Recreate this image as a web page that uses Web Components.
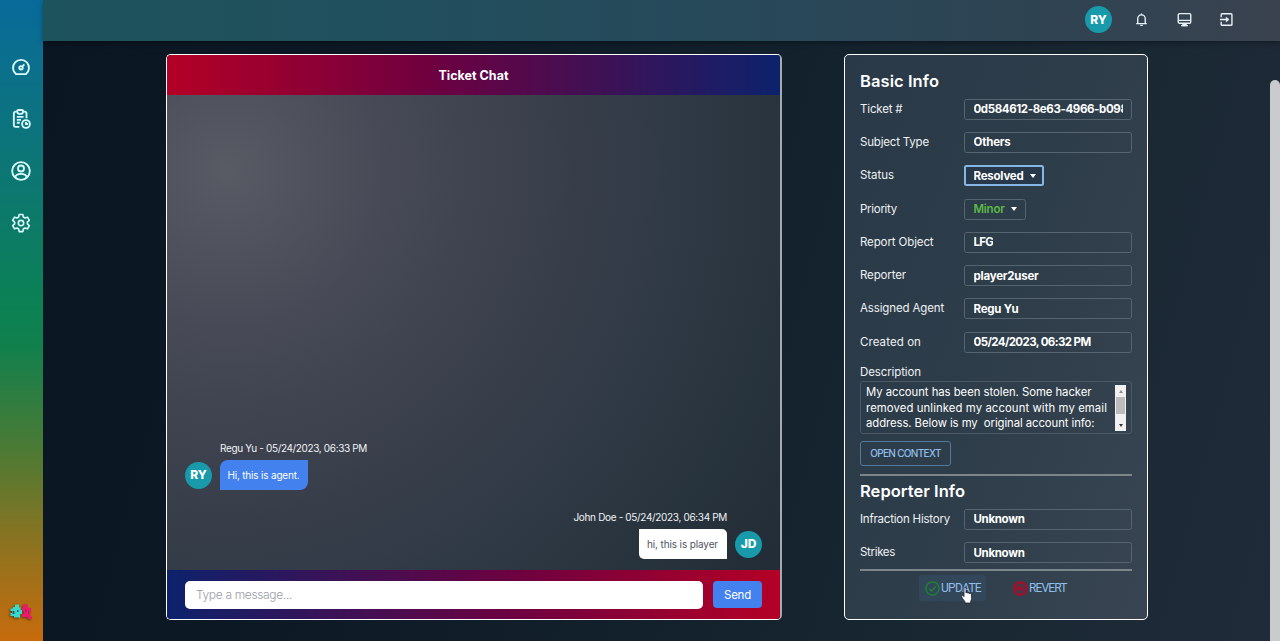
<!DOCTYPE html>
<html lang="en">
<head>
<meta charset="utf-8">
<title>Ticket Chat</title>
<style>
html,body{margin:0;height:100%;overflow:hidden}
body{font-family:Inter,"Open Sans",sans-serif;color:#fff;background:#0b1824}
</style>
</head>
<body>
<support-app></support-app>
<script>
const define=(name,html,setup)=>{
  const t=document.createElement('template');t.innerHTML=html;
  customElements.define(name,class extends HTMLElement{
    connectedCallback(){
      if(this.shadowRoot)return;
      this.attachShadow({mode:'open'}).append(t.content.cloneNode(true));
      if(setup)setup(this,this.shadowRoot);
    }
  });
};

/* A run of text tracked to a set width */
define('fit-text',`<style>:host{display:inline-block;white-space:pre}</style><slot></slot>`,(el)=>{
  const w=parseFloat(el.getAttribute('w'));
  const n=el.textContent.length;
  const r=document.createRange();r.selectNodeContents(el);
  el.style.letterSpacing=((w-r.getBoundingClientRect().width)/n).toFixed(3)+'px';
});

const icons={
 gauge:`<path d="M6 20.500h12a9.600 9.600 0 1 0-12 0z"/><circle cx="12" cy="13" r="2.100"/><path d="M13.600 11.400 16 8.800"/>`,
 clip:`<path d="M10 21.500H5.600a2.200 2.200 0 0 1-2.200-2.200V5.400a2.200 2.200 0 0 1 2.200-2.200H7M15 3.200h1.400a2.200 2.200 0 0 1 2.200 2.200V11"/><path d="M7.500 2.500c0-1 .5-1.300 1.500-1.300h4c1 0 1.500.3 1.500 1.300 0 2-1 3.300-2.200 3.300H9.700c-1.200 0-2.200-1.300-2.200-3.300z"/><path d="M7 9.500h8M7 13h5M7 16.500h3.500"/><circle cx="18" cy="18" r="4.700"/><path d="M18 15.500V18h2.500"/>`,
 user:`<circle cx="12" cy="12" r="10.600"/><circle cx="12" cy="9" r="3.600"/><path d="M5 19.700c.8-3 3.600-4.200 7-4.200s6.200 1.200 7 4.200"/>`,
 gear:`<circle cx="12" cy="12" r="3.200"/><path d="M9.800 1.700h4.400l.6 3.100 2 1.200 3-1 2.200 3.800-2.400 2.100v2.200l2.400 2.100-2.200 3.800-3-1-2 1.200-.6 3.100H9.800l-.6-3.100-2-1.200-3 1L2 15.200l2.400-2.100v-2.200L2 8.800 4.200 5l3 1 2-1.200z" stroke-linejoin="round"/>`,
 bell:`<path d="M3.500 18.500h17M6 18v-7.500a6 6 0 0 1 12 0V18"/><path d="M12 4.500V2.200M10 21.300h4"/>`,
 monitor:`<rect x="2" y="2.500" width="20" height="15.500" rx="2"/><path d="M2.500 13.300h19M6.500 21.800h11"/><path d="M9.500 18v3.500h5V18" fill="currentColor"/>`,
 login:`<path d="M3.500 8.500V4.200c0-1 .4-1.400 1.400-1.400h14.400c1 0 1.400.4 1.400 1.400v15.600c0 1-.4 1.400-1.400 1.400H4.900c-1 0-1.400-.4-1.400-1.400v-4.300M1.500 12H14"/><path d="m11.500 8.200 4.500 3.800-4.500 3.800z" fill="currentColor" stroke-width="1"/>`,
 check:`<circle cx="12" cy="12" r="10.500"/><path d="m7 12.500 3.500 3.500 7-7.500"/>`,
 revert:`<circle cx="12" cy="12" r="10" stroke-width="3.600"/><path d="M4 5l16 14" stroke-width="1.500"/><path d="M5 12h10M11 7.500 6 12l5 4.500"/><circle cx="15" cy="12" r="2.500"/>`
};
define('ui-icon',`<style>:host{display:block;width:var(--s,18px);height:var(--s,18px);flex:none}svg{display:block;width:100%;height:100%;fill:none;stroke:currentColor;stroke-width:var(--sw,2)}</style><svg viewBox="0 0 24 24"></svg>`,(el,r)=>{r.querySelector('svg').innerHTML=icons[el.getAttribute('name')]});

define('user-avatar',`<style>:host{display:flex;flex:none;width:27px;height:27px;border-radius:50%;background:#189aab;align-items:center;justify-content:center;font-size:12px;font-weight:800;line-height:1}</style><slot></slot>`);

define('side-bar',`<style>
:host{display:flex;flex-direction:column;align-items:center;width:43px;flex:none;box-sizing:border-box;padding:57px 1px 20px 0;color:#d9fbff;background:linear-gradient(180deg,#086a9b 0,#0b7089 12%,#0c7772 28%,#0b8153 48%,#11804d 54%,#4b7a34 70%,#8d7320 85%,#c76b0c 100%)}
nav{display:flex;flex-direction:column;gap:32px;--s:20px;--sw:2.200}
.logo{display:block;margin-top:auto;width:24px;height:19px;filter:drop-shadow(-1px 1px 1px #0007)}
</style><nav><ui-icon name="gauge"></ui-icon><ui-icon name="clip"></ui-icon><ui-icon name="user"></ui-icon><ui-icon name="gear" style="--sw:1.900"></ui-icon></nav>
<svg class="logo" viewBox="0 0 24 19"><path fill="#35d9ce" d="M6 2.500h4v3h1.500V8H13v4h-2v3.500H5V14H1.500v-3H3V9H1.500V6.500H4V5h2z"/><path fill="#32566b" d="M3.500 9h2v3h-2zM8 8h1.500v2H8z"/><path fill="#ed176d" d="M14 2.500h5V6h3v4.500h-1V13l2 2v2h-3l-2-2h-5v-3h1.500V9H13V6h1z"/><path fill="#8d344b" d="M16 7h1.500v3H16zM19 9h1v3h-1z"/></svg>`);

define('top-bar',`<style>
:host{display:flex;flex:none;height:41px;box-sizing:border-box;align-items:center;justify-content:flex-end;padding:0 46px 2px 0;background:linear-gradient(90deg,#1d535c 0,#20505d 25%,#27495a 55%,#2e4352 80%,#3a424f 100%);box-shadow:0 2px 5px #0005;color:#e8f1f8}
user-avatar{margin-right:22px;color:#fff}
.i{display:flex;gap:27.500px;--s:15px;--sw:2.200}
</style><user-avatar>RY</user-avatar><div class="i"><ui-icon name="bell"></ui-icon><ui-icon name="monitor"></ui-icon><ui-icon name="login"></ui-icon></div>`);

define('chat-message',`<style>
:host{display:grid;grid-template-columns:27px auto;column-gap:8px;width:max-content;align-items:center}
.meta{grid-column:2;font-size:10px;line-height:14px;margin-bottom:5px;color:#f1f3f5}
.b{width:88px;height:30px;box-sizing:border-box;padding-left:7.500px;display:flex;align-items:center;font-size:10px;background:#4281ee;border-radius:8px 0 8px 0}
:host([mine]){grid-template-columns:auto 27px;align-self:flex-end}
:host([mine]) .meta{grid-column:1}
:host([mine]) .b{grid-column:1;grid-row:2;justify-self:end;background:#fff;color:#4f5461;padding-left:8px;border-radius:0 5px 0 5px}
:host([mine]) user-avatar{grid-column:2;grid-row:2}
</style><div class="meta"><slot name="meta"></slot></div><user-avatar></user-avatar><div class="b"><slot></slot></div>`,(el,r)=>{r.querySelector('user-avatar').textContent=el.getAttribute('who')});

define('ticket-chat',`<style>
:host{display:flex;flex-direction:column;width:616px;height:566px;box-sizing:border-box;border:1px solid #fff;border-right:2px solid #a5aab0;border-radius:5px;overflow:hidden}
header{height:40px;display:flex;align-items:center;justify-content:center;font-size:12.500px;font-weight:700;background:linear-gradient(90deg,#b40026,#6e0040 43%,#0c226c)}
.body{flex:1;display:flex;flex-direction:column;justify-content:flex-end;gap:20px;padding:0 18px 11px;background:radial-gradient(circle at 60px 75px,#585a64 0,#4e505b 14%,#444754 28%,#393f4b 47%,#303a46 65%,#26323c 84%,#222c36 100%)}
footer{height:49px;display:flex;align-items:center;gap:10px;padding:0 18px;background:linear-gradient(90deg,#0c226c,#6e0040 57%,#b40026)}
.in{flex:1;height:28px;border-radius:5px;background:#fff;color:#999da6;display:flex;align-items:center;padding-left:11px;font-size:12px;font-weight:300}
.send{width:49px;height:27px;border-radius:4px;background:#4281ee;display:flex;align-items:center;justify-content:center;font-size:11.500px}
</style><header><fit-text w="70">Ticket Chat</fit-text></header>
<div class="body">
<chat-message who="RY"><fit-text slot="meta" w="147">Regu Yu - 05/24/2023, 06:33 PM</fit-text><fit-text w="72">Hi, this is agent.</fit-text></chat-message>
<chat-message who="JD" mine><fit-text slot="meta" w="153.500">John Doe - 05/24/2023, 06:34 PM</fit-text><fit-text w="71">hi, this is player</fit-text></chat-message>
</div>
<footer><div class="in"><fit-text w="96">Type a message...</fit-text></div><div class="send"><fit-text w="27">Send</fit-text></div></footer>`);

define('info-row',`<style>
:host{display:grid;grid-template-columns:104px minmax(0,1fr);height:33.300px;align-items:center;font-size:11.500px}
.l{color:#eef1f4;margin-top:-1px}
.v{height:21px;box-sizing:border-box;border:1px solid #566470;border-radius:2.500px;display:flex;align-items:center;padding:0 8.500px;font-weight:700}
.c{overflow:hidden;display:flex}
:host([pick]) .v{width:max-content;gap:6px;padding-right:8px}
:host([pick]) .v::after{content:"";border:3.500px solid transparent;border-top:4px solid #fff;border-bottom:0}
:host([focus]) .v{border:2px solid #86b7e4;padding:0 6.500px 0 7.500px;background:#26384a}
:host([green]) .c{color:#5cb848;font-weight:600}
</style><div class="l"><slot name="label"></slot></div><div class="v"><div class="c"><slot></slot></div></div>`);

define('note-box',`<style>
:host{display:flex;box-sizing:border-box;height:53px;border:1px solid #4c5964;border-radius:3px;padding:2px 5px 2px 5px;font-size:11.300px;line-height:15.300px;justify-content:space-between}
.t{display:flex;flex-direction:column;padding-top:1px}
.s{width:11px;height:46px;margin-top:1px;background:#f1f1f1;display:flex;flex-direction:column;align-items:center}
.s i{border:2.500px solid transparent}
.u{border-top:0!important;border-bottom:3px solid #8b8b8b!important;margin:5px 0 4px}
.h{width:9px;height:17px;background:#bcbcbc}
.d{border-bottom:0!important;border-top:3px solid #333!important;margin-top:10px}
</style><div class="t"><fit-text w="225.500">My account has been stolen. Some hacker</fit-text><fit-text w="241">removed unlinked my account with my email</fit-text><fit-text w="228.500">address. Below is my  original account info:</fit-text></div><div class="s"><i class="u"></i><div class="h"></div><i class="d"></i></div>`);

define('mouse-hand',`<style>:host{position:absolute;left:42px;top:12px;width:12px;height:17px}svg{display:block}</style><svg width="12" height="17" viewBox="0 0 12 17"><path d="M3 1.500c0-1.300 2-1.300 2 0V6c.3-.8 1.800-.6 1.900.3.4-.7 1.700-.5 1.800.4.6-.5 1.800-.2 1.800.9v4.200c0 1-.8 1.500-.8 3V16H4v-1.200C3.500 13.500.8 11 .6 9.500.5 8.300 2 8.200 3 9.600z" fill="#fff" stroke="#1b2530" stroke-width=".8"/></svg>`);

define('ticket-info',`<style>
:host{display:block;width:304px;height:566px;box-sizing:border-box;border:1px solid #fff;border-radius:5px;padding:13px 15px 0;background:linear-gradient(110deg,#2a3947 0,#2e3d4a 50%,#384451 100%)}
h2{margin:0;height:24.500px;line-height:26px;font-size:16.500px;font-weight:600}
h2.r{height:26.500px;line-height:31px}
.dl{font-size:11.500px;line-height:17px;padding-top:5.500px;color:#eef1f4}
.open{display:flex;align-items:center;justify-content:center;width:91px;height:25px;box-sizing:border-box;border:1px solid #54799b;border-radius:3px;margin-top:6.500px;font-size:10px;font-weight:500;color:#90bfea}
hr{border:0;height:2px;margin:0;background:#7b858a}
hr.a{margin-top:8.200px}
.acts{display:flex;padding:4px 0 0 59px;gap:21px;color:#90bfea;font:400 12px Roboto,sans-serif}
.acts div{position:relative;display:flex;align-items:center;height:26px;width:67px;box-sizing:border-box;padding-left:6px;gap:1px;border-radius:3px;--s:15px}
.up{background:#33475a}
</style>
<h2><fit-text w="79">Basic Info</fit-text></h2>
<info-row><fit-text slot="label" w="42.500">Ticket #</fit-text><fit-text w="154">0d584612-8e63-4966-b098</fit-text></info-row>
<info-row><fit-text slot="label" w="69">Subject Type</fit-text><fit-text w="37">Others</fit-text></info-row>
<info-row pick focus><fit-text slot="label" w="34">Status</fit-text><fit-text w="50">Resolved</fit-text></info-row>
<info-row pick green><fit-text slot="label" w="37">Priority</fit-text><fit-text w="31">Minor</fit-text></info-row>
<info-row><fit-text slot="label" w="73.500">Report Object</fit-text><fit-text w="19.500">LFG</fit-text></info-row>
<info-row><fit-text slot="label" w="46">Reporter</fit-text><fit-text w="65">player2user</fit-text></info-row>
<info-row><fit-text slot="label" w="84">Assigned Agent</fit-text><fit-text w="45">Regu Yu</fit-text></info-row>
<info-row><fit-text slot="label" w="61">Created on</fit-text><fit-text w="117">05/24/2023, 06:32 PM</fit-text></info-row>
<div class="dl"><fit-text w="61">Description</fit-text></div>
<note-box></note-box>
<div class="open"><fit-text w="70.500">OPEN CONTEXT</fit-text></div>
<hr class="a">
<h2 class="r"><fit-text w="105">Reporter Info</fit-text></h2>
<info-row><fit-text slot="label" w="90">Infraction History</fit-text><fit-text w="51">Unknown</fit-text></info-row>
<info-row><fit-text slot="label" w="35">Strikes</fit-text><fit-text w="51">Unknown</fit-text></info-row>
<hr>
<div class="acts"><div class="up"><ui-icon name="check" style="color:#1c8a2b"></ui-icon><fit-text w="40">UPDATE</fit-text><mouse-hand></mouse-hand></div><div><ui-icon name="revert" style="color:#a50f2c"></ui-icon><fit-text w="37.500">REVERT</fit-text></div></div>`);

define('page-scroll',`<style>:host{display:flex;box-sizing:border-box;width:10px;height:600px;padding-top:39px}i{flex:1;background:#c9cbcd;border-radius:5px 5px 0 0}</style><i></i>`);

define('support-app',`<style>
:host{display:flex;width:1280px;height:641px;overflow:hidden}
.col{flex:1;display:flex;flex-direction:column;background:linear-gradient(105deg,#0a1622 0,#0c1925 25%,#13212d 55%,#1a2834 80%,#1f2b38 100%)}
main{flex:1;display:flex;align-items:flex-start;padding-left:123px}
ticket-chat,ticket-info{margin-top:13px}
ticket-info{margin-left:62px}
page-scroll{margin-left:auto}
</style><side-bar></side-bar><div class="col"><top-bar></top-bar><main><ticket-chat></ticket-chat><ticket-info></ticket-info><page-scroll></page-scroll></main></div>`);
</script>
</body>
</html>
